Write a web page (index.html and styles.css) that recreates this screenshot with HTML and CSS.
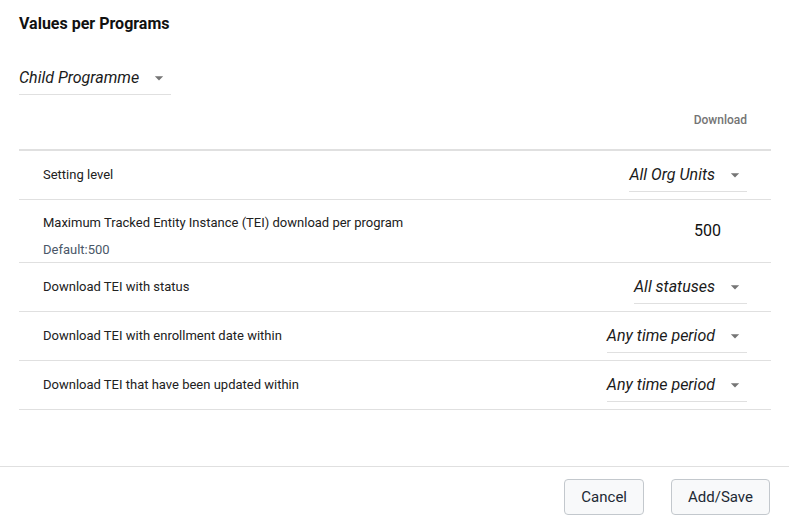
FILE: index.html
```html
<!DOCTYPE html>
<html lang="en">
<head>
<meta charset="utf-8">
<title>Values per Programs</title>
<link rel="stylesheet" href="styles.css">
</head>
<body>
<div class="content">
  <h2 class="title">Values per Programs</h2>
  <div class="program-select">
    <div class="select">
      <span class="select-value">Child Programme</span>
      <svg class="arrow" viewBox="0 0 24 24" width="24" height="24"><path d="M7 10l5 5 5-5z"/></svg>
    </div>
  </div>
  <div class="table">
    <div class="table-head">
      <span class="head-cell">Download</span>
    </div>
    <div class="row">
      <div class="label">Setting level</div>
      <div class="select">
        <span class="select-value">All Org Units</span>
        <svg class="arrow" viewBox="0 0 24 24" width="24" height="24"><path d="M7 10l5 5 5-5z"/></svg>
      </div>
    </div>
    <div class="row row-tall">
      <div class="label-block">
        <div class="label">Maximum Tracked Entity Instance (TEI) download per program</div>
        <div class="help">Default:500</div>
      </div>
      <div class="number">500</div>
    </div>
    <div class="row">
      <div class="label">Download TEI with status</div>
      <div class="select">
        <span class="select-value">All statuses</span>
        <svg class="arrow" viewBox="0 0 24 24" width="24" height="24"><path d="M7 10l5 5 5-5z"/></svg>
      </div>
    </div>
    <div class="row">
      <div class="label">Download TEI with enrollment date within</div>
      <div class="select">
        <span class="select-value">Any time period</span>
        <svg class="arrow" viewBox="0 0 24 24" width="24" height="24"><path d="M7 10l5 5 5-5z"/></svg>
      </div>
    </div>
    <div class="row">
      <div class="label">Download TEI that have been updated within</div>
      <div class="select">
        <span class="select-value">Any time period</span>
        <svg class="arrow" viewBox="0 0 24 24" width="24" height="24"><path d="M7 10l5 5 5-5z"/></svg>
      </div>
    </div>
  </div>
</div>
<div class="footer">
  <button class="btn">Cancel</button>
  <button class="btn">Add/Save</button>
</div>
</body>
</html>
```
FILE: styles.css
```css
* { box-sizing: border-box; }

html, body {
  margin: 0;
  padding: 0;
  background: #ffffff;
}

body {
  font-family: Roboto, "Liberation Sans", Arial, sans-serif;
  color: #212121;
}

.content {
  padding: 14px 18px 0 19px;
}

.title {
  margin: 0;
  font-size: 16px;
  font-weight: 700;
  line-height: 20px;
  color: #111111;
}

.program-select {
  margin-top: 28px;
  display: flex;
}

.select {
  display: inline-flex;
  align-items: center;
  padding: 6px 0 6px 0;
  border-bottom: 1px solid #e0e0e0;
}

.select-value {
  font-size: 16px;
  font-style: italic;
  line-height: 20px;
  color: #1a1a1a;
  margin-right: 8px;
}

.arrow {
  display: block;
  width: 24px;
  height: 20px;
  fill: #757575;
  overflow: visible;
}

.table-head {
  display: flex;
  justify-content: flex-end;
  padding: 18px 24px 22px 24px;
  border-bottom: 2px solid #e0e0e0;
}

.head-cell {
  font-size: 12px;
  font-weight: 500;
  line-height: 14px;
  color: #747474;
}

.row {
  display: flex;
  align-items: center;
  justify-content: space-between;
  height: 49px;
  padding: 0 24px;
  border-bottom: 1px solid #e0e0e0;
}

.row-tall {
  height: 63px;
  align-items: flex-start;
}

.label {
  font-size: 13px;
  line-height: 16px;
  color: #212121;
}

.label-block {
  padding-top: 15px;
}

.help {
  margin-top: 11px;
  font-size: 13px;
  line-height: 16px;
  color: #4a5768;
}

.number {
  align-self: center;
  font-size: 16px;
  line-height: 20px;
  color: #111111;
  margin-right: 26px;
}

.footer {
  margin-top: 56px;
  border-top: 1px solid #e0e0e0;
  padding: 12px 19px 0 19px;
  display: flex;
  justify-content: flex-end;
  gap: 27px;
}

.btn {
  height: 36px;
  padding: 0 16px;
  border: 1px solid #c3c8cd;
  border-radius: 4px;
  background: #f8f9fa;
  font-family: Roboto, "Liberation Sans", Arial, sans-serif;
  font-size: 15px;
  color: #212934;
}
```
